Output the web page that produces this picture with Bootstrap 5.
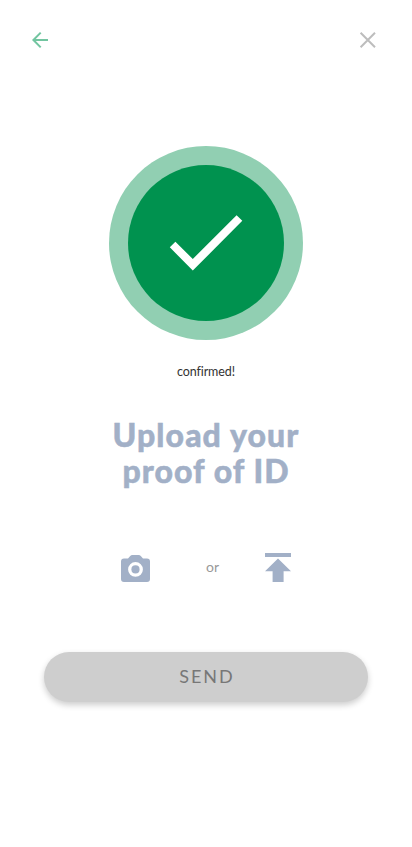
<!DOCTYPE html>
<html lang="en">
<head>
<meta charset="utf-8">
<meta name="viewport" content="width=device-width, initial-scale=1">
<title>Upload your proof of ID</title>
<link href="https://cdn.jsdelivr.net/npm/bootstrap@5.3.0/dist/css/bootstrap.min.css" rel="stylesheet">
<style>
body { font-family: Lato, "Open Sans", sans-serif; background: #fff; }
.screen { min-height: 847px; }
.topbar { height: 80px; padding: 0 32px; }
.icon-btn { line-height: 0; }
.status-ring { width: 194px; height: 194px; margin-top: 66px; background: #91cfb2; }
.status-disc { width: 156px; height: 156px; background: #00924f; }
.status-text { margin-top: 23px; font-size: 12.5px; line-height: 18px; color: #333; letter-spacing: -.12px; }
.title { margin-top: 36px; font-size: 32px; line-height: 36px; font-weight: 900; color: #a2b0c7; -webkit-text-stroke: .5px #a2b0c7; }
.title-a { letter-spacing: 1.1px; }
.title-b { letter-spacing: 1.05px; }
.choices { margin-top: 63px; height: 32px; width: 170px; }
.or-text { font-size: 14px; line-height: 20px; color: #999; padding: 0 0 2px 10px; }
.send { width: 324px; height: 50px; margin-top: 68px; padding: 0 0 2px 2px; background: #cecece; color: #777; font-size: 18px; letter-spacing: 2px; line-height: 1; box-shadow: 0 3px 6px rgba(0,0,0,.2); }
</style>
</head>
<body>
<main class="screen d-flex flex-column align-items-center">
  <header class="topbar w-100 d-flex justify-content-between align-items-center">
    <button class="icon-btn btn p-0 border-0" aria-label="Back">
      <svg width="17" height="18" viewBox="0 0 17 18" fill="none" stroke="#72c5a0" stroke-width="2"><path d="M16 9H1.5M8.7 1.6 1.4 9l7.3 7.4"/></svg>
    </button>
    <button class="icon-btn btn p-0 border-0" aria-label="Close">
      <svg width="24" height="18" viewBox="0 0 24 18" fill="none" stroke="#bdbdbd" stroke-width="2"><path d="m4.600 1.800 14.400 14.400M19 1.800 4.600 16.200"/></svg>
    </button>
  </header>
  <div class="status-ring rounded-circle d-flex justify-content-center align-items-center">
    <div class="status-disc rounded-circle">
      <svg width="156" height="156" viewBox="128 165 156 156" fill="#fff"><path d="m169.800 247.300 5.600-5.600 17.400 17.300 43.800-43.800 5.700 5.600-49.500 49.800z"/></svg>
    </div>
  </div>
  <p class="status-text mb-0">confirmed!</p>
  <h1 class="title mb-0 text-center"><span class="title-a">Upload your</span><br><span class="title-b">proof of ID</span></h1>
  <div class="choices d-flex justify-content-between align-items-center">
    <button class="icon-btn btn p-0 border-0" aria-label="Take photo">
      <svg width="29" height="30" viewBox="0 0 29 30" fill="#a2b0c7"><path fill-rule="evenodd" d="M3 5.500H7L9 3.200Q10 2 11.500 2H17.500Q19 2 20 3.200L22 5.500H26Q29 5.500 29 8.500V26Q29 29 26 29H3Q0 29 0 26V8.500Q0 5.500 3 5.500ZM14.500 9A7.400 7.400 0 1 0 14.500 23.800A7.400 7.400 0 1 0 14.500 9Z"/><circle cx="14.500" cy="16.400" r="4.100"/></svg>
    </button>
    <span class="or-text">or</span>
    <button class="icon-btn btn p-0 border-0" aria-label="Upload file">
      <svg width="26" height="30" viewBox="0 0 26 30" fill="#a2b0c7"><path d="M0 0H26V4H0ZM13 5.500 26 18.300H18.600V29H7.600V18.300H0Z"/></svg>
    </button>
  </div>
  <button class="send btn rounded-pill border-0">SEND</button>
</main>
<script src="https://cdn.jsdelivr.net/npm/bootstrap@5.3.0/dist/js/bootstrap.bundle.min.js"></script>
</body>
</html>
